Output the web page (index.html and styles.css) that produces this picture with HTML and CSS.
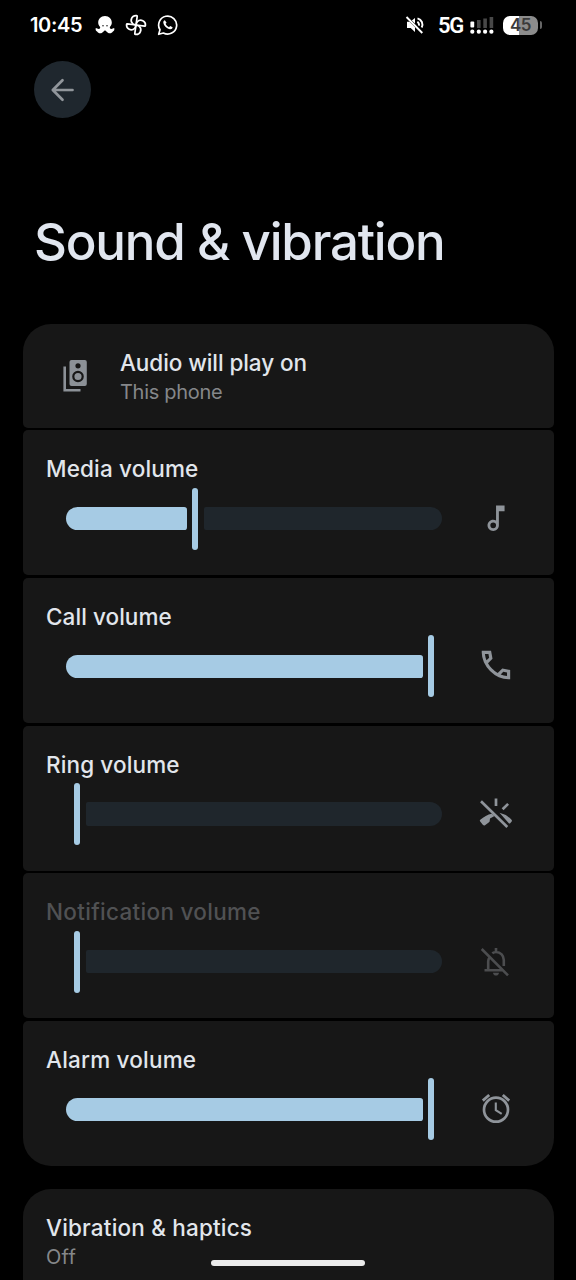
FILE: index.html
```html
<!DOCTYPE html>
<html lang="en">
<head>
<meta charset="utf-8">
<title>Sound &amp; vibration</title>
<link rel="stylesheet" href="styles.css">
</head>
<body>
<div class="screen">
  <header class="status">
    <span class="clock">10:45</span>
    <svg class="octopus" width="20" height="20" viewBox="0 0 20 20" fill="#fff"><path d="M10 1C5.800 1 3.200 4 3.200 7.500c0 2 .9 3.300 1.900 4.400.3 1.300-.3 2-1.500 2-1 0-1.700-.8-2.800-.8-.5 1.700.1 2.900 1.300 3.400 1 2 3.500 2.200 5 1.200L10 15.300l2.900 2.400c1.500 1 4 .8 5-1.200 1.200-.5 1.800-1.700 1.300-3.400-1.100 0-1.800.8-2.800.8-1.200 0-1.800-.7-1.500-2 1-1.100 1.900-2.400 1.900-4.400C16.800 4 14.200 1 10 1z"/><g fill="#222"><circle cx="8" cy="10.800" r=".8"/><circle cx="12" cy="10.800" r=".8"/></g></svg>
    <svg class="pinwheel" width="22" height="22" viewBox="0 0 22 22" fill="none" stroke="#fff" stroke-width="1.700" stroke-linejoin="round"><g transform="rotate(8 11 11)"><path d="M11 11V2.300q0-.7-.8-.7a4.700 4.700 0 0 0-2.700 8.500Q9 11 11 11z"/><path d="M11 11h8.700q.7 0 .7-.8a4.700 4.700 0 0 0-8.500-2.700Q11 9 11 11z"/><path d="M11 11v8.700q0 .7.800.7a4.700 4.700 0 0 0 2.700-8.500Q13 11 11 11z"/><path d="M11 11H2.300q-.7 0-.7.800a4.700 4.700 0 0 0 8.500 2.700Q11 13 11 11z"/></g></svg>
    <svg class="chat" width="22" height="22" viewBox="0 0 22 22"><path d="M1.700 20.300 3 15.800A9 9 0 1 1 6.400 19z" fill="none" stroke="#fff" stroke-width="1.700" stroke-linejoin="round"/><path d="M7.900 6.200c-.9.100-1.700 1-1.600 2.400.4 3.300 3.700 6.400 6.800 6.700 1.500.1 2.500-.8 2.500-2l-2.400-1.300-1.200 1.200c-1.600-.7-2.800-1.900-3.400-3.400l1-1.100z" fill="#fff"/></svg>
    <span class="spacer"></span>
    <svg class="mute" width="20" height="20" viewBox="0 0 20 20"><path d="M10 3v5.500L6.800 5.600zM2 6.800h2.500l5.500 5.500V17l-4.300-4H2z" fill="#fff"/><path d="M1.500 2l15.800 16M12.300 6.800c1.300.7 1.900 2 1.700 3.800M12.500 3.300c4.300 1.300 6 5.500 4.200 9.200" fill="none" stroke="#fff" stroke-width="1.900"/></svg>
    <span class="network">5G</span>
    <svg class="signal" width="24" height="20" viewBox="0 0 24 20"><g fill="#484848"><rect x="7" y="5" width="3.600" height="8"/><rect x="13.300" y="3.500" width="3.600" height="9.500"/><rect x="19.600" y="2" width="3.600" height="11"/></g><g fill="#fff"><rect x=".4" y="6.500" width="3.800" height="6" rx="1"/><circle cx="2.300" cy="16.700" r="2.100"/><circle cx="8.800" cy="16.700" r="2.100"/><circle cx="15.100" cy="16.700" r="2.100"/><circle cx="21.400" cy="16.700" r="2.100"/></g></svg>
    <span class="battery">45</span><span class="battery-tip"></span>
  </header>

  <div class="toolbar">
    <span class="back"><svg width="28" height="28" viewBox="0 0 28 28" fill="none" stroke="#91969b" stroke-width="2.700" stroke-linecap="round" stroke-linejoin="round"><path d="M23.500 14H4M13.500 4.300 3.800 14l9.700 9.700"/></svg></span>
  </div>
  <h1 class="title">Sound &amp; vibration</h1>

  <main class="group">
    <section class="card output">
      <svg class="speaker" width="26" height="34" viewBox="0 0 26 34"><path d="M1.700 7.500V31.200H17.500" fill="none" stroke="#8c9197" stroke-width="2.600"/><rect x="6.500" y="1" width="17.300" height="26" rx="2" fill="#8c9197"/><circle cx="15" cy="6.800" r="2.600" fill="#171717"/><circle cx="15" cy="17.500" r="4.700" fill="none" stroke="#171717" stroke-width="2.200"/></svg>
      <div class="lines"><div class="label l-audio">Audio will play on</div><div class="sub l-phone">This phone</div></div>
    </section>

    <section class="card volume">
      <div class="label l-media">Media volume</div>
      <div class="row">
        <div class="slider"><i class="fill" style="width:121px"></i><i class="handle"></i><i class="rest"></i></div>
        <svg class="icon" viewBox="0 0 40 40"><path transform="translate(3 2.200) scale(1.420)" fill="#8f949a" d="M12 3v10.550c-.59-.34-1.270-.55-2-.55-2.210 0-4 1.790-4 4s1.790 4 4 4 4-1.790 4-4V7h4V3h-6zM10 19a2 2 0 1 1 0-4 2 2 0 0 1 0 4z"/></svg>
      </div>
    </section>

    <section class="card volume">
      <div class="label l-call">Call volume</div>
      <div class="row">
        <div class="slider"><i class="fill" style="width:357px"></i><i class="handle"></i></div>
        <svg class="icon" viewBox="0 0 40 40"><path transform="translate(1 .1) scale(1.580)" fill="#8f949a" fill-rule="evenodd" d="M19.950 21q-3.125 0-6.175-1.362t-5.550-3.863-3.862-5.550T3 4.050V3h5.900l.925 5.025-2.850 2.875q.55.975 1.225 1.850t1.450 1.625q.725.725 1.588 1.388T13.100 17l2.900-2.900 5 1.025V21zM6.025 9l1.650-1.650L7.250 5H5.025q.125 1.025.35 2.025T6.025 9zM14.975 17.950q.975.425 1.988.675T19 18.950v-2.200l-2.350-.475z"/></svg>
      </div>
    </section>

    <section class="card volume">
      <div class="label l-ring">Ring volume</div>
      <div class="row">
        <div class="slider empty"><i class="handle"></i><i class="rest"></i></div>
        <svg class="icon" viewBox="0 0 40 40"><g fill="none" stroke="#8f949a" stroke-width="2.700"><path d="M5 7.300 31.300 33M20 4.600v7.400M26.600 15.200l5.500-5.300"/></g><path fill="#8f949a" d="M4 27.300 7 31q1 .7 2 .2l4-3q.7-.5.7-1.200l.3-2.500 4.500-2.500-2.700-2.300Q9.500 21 4.300 25.800q-.8.700-.3 1.500zM23.500 18.800Q31 20.500 35.500 25.800q.8.900.2 1.700l-1.500 1.800q-.6.500-1.400 0z"/></svg>
      </div>
    </section>

    <section class="card volume disabled">
      <div class="label l-notif">Notification volume</div>
      <div class="row">
        <div class="slider empty"><i class="handle"></i><i class="rest"></i></div>
        <svg class="icon" viewBox="0 0 40 40"><g fill="none" stroke="#4c4d4f" stroke-width="2.600"><path d="M5.700 7 32 33.300M16.300 11.300q1.700-1.300 3.700-1.300c4.600 0 7.800 3.500 7.800 8v6M13.500 15.500q-1.300 1.800-1.300 4V28M8.500 28.200H27M20 6v4"/></g><path fill="#4c4d4f" d="M17 30.700h6q-.4 2.800-3 2.800t-3-2.800z"/></svg>
      </div>
    </section>

    <section class="card volume">
      <div class="label l-alarm">Alarm volume</div>
      <div class="row">
        <div class="slider"><i class="fill" style="width:357px"></i><i class="handle"></i></div>
        <svg class="icon" viewBox="0 0 40 40" fill="none" stroke="#8f949a"><circle cx="20" cy="20.700" r="12" stroke-width="2.700"/><path d="M19.800 13.500v7.700l5.900 3.600" stroke-width="2.100"/><path d="M6.800 11.600 13.200 6M33.200 11.600 26.800 6" stroke-width="2.800"/></svg>
      </div>
    </section>
  </main>

  <section class="card haptics">
    <div class="label l-haptics">Vibration &amp; haptics</div>
    <div class="sub l-off">Off</div>
  </section>
  <div class="home-bar"></div>
</div>
</body>
</html>
```
FILE: styles.css
```css
* { box-sizing: border-box; }
body { margin: 0; background: #000; font-family: Inter, "Noto Sans", sans-serif; }
svg { display: block; flex: none; }
.screen { position: relative; width: 576px; height: 1280px; overflow: hidden; background: #000; }

.status { display: flex; align-items: center; height: 50px; padding: 0 34px 0 30px; color: #fff; }
.clock { width: 53px; font-size: 20px; font-weight: 600; letter-spacing: -0.350px; white-space: nowrap; }
.octopus { margin-left: 12px; }
.pinwheel { margin-left: 10px; }
.chat { margin-left: 10px; }
.spacer { flex: 1; }
.mute { margin-right: 13px; }
.network { width: 25px; margin-right: 7px; font-family: Roboto, sans-serif; font-size: 22px; font-weight: 600; letter-spacing: -1.300px; line-height: 26px; padding-top: 2px; }
.signal { margin-right: 9px; }
.battery { width: 35px; height: 19px; border-radius: 7px; background: linear-gradient(90deg, #fff 46%, #8c8c8c 46%); color: #3a3a3a; font-size: 17px; font-weight: 600; line-height: 19px; letter-spacing: -0.500px; text-align: center; }
.battery-tip { width: 2px; height: 8px; margin-left: 2px; border-radius: 0 2px 2px 0; background: #666; }

.toolbar { height: 80px; padding: 11.400px 0 0 34px; }
.back { display: flex; align-items: center; justify-content: center; width: 57px; height: 57px; border-radius: 50%; background: #1f272e; }
.title { height: 194px; margin: 0; padding: 80px 0 0 34px; color: #e1e6ef; font-size: 51px; font-weight: 500; line-height: 64px; letter-spacing: -1.200px; white-space: nowrap; }

.group { display: flex; flex-direction: column; gap: 2.800px; margin: 0 22.500px; }
.card { border-radius: 5px; background: #171717; }
.card:first-child { border-radius: 28px 28px 5px 5px; }
.group .card:last-child { border-radius: 5px 5px 28px 28px; }
.output { display: flex; height: 103.600px; padding: 25px 0 0 40px; }
.speaker { margin: 10px 31.500px 0 0; }
.label { height: 28px; color: #e2e6ec; font-size: 22.500px; font-weight: 500; line-height: 28px; white-space: nowrap; }
.sub { height: 31px; color: #85878a; font-size: 20px; font-weight: 400; line-height: 31px; white-space: nowrap; }
.l-audio { letter-spacing: -0.080px; }
.l-phone { letter-spacing: -0.300px; }
.l-media { letter-spacing: 0.150px; }
.l-call { letter-spacing: 0.060px; }
.l-ring { letter-spacing: 0.130px; }
.l-notif { letter-spacing: 0.300px; }
.l-alarm { letter-spacing: 0.200px; }
.l-haptics { letter-spacing: 0.180px; }
.l-off { letter-spacing: 0.300px; }
.volume { height: 144.900px; padding: 25px 0 0 23.500px; }
.row { display: flex; align-items: center; height: 62px; margin: 4.200px 0 0 19.500px; }
.slider { display: flex; align-items: center; gap: 5.500px; width: 376.500px; height: 62px; margin-right: 34px; }
.empty { padding-left: 8.500px; }
.fill, .rest { height: 23.500px; }
.fill { flex: none; border-radius: 12px 3px 3px 12px; background: #a6cbe4; }
.handle { flex: none; width: 6px; height: 62px; border-radius: 3px; background: #a6cbe4; }
.rest { flex: 1; border-radius: 2px 12px 12px 2px; background: #1f262c; }
.icon { width: 40px; height: 40px; }
.disabled .label { color: #505153; }
.haptics { height: 130px; margin: 22.900px 22.500px 0; padding: 24.600px 23.500px; border-radius: 28px 28px 0 0; }
.home-bar { position: absolute; left: 211px; top: 1260px; width: 154px; height: 6px; border-radius: 3px; background: #ebebeb; }
```
